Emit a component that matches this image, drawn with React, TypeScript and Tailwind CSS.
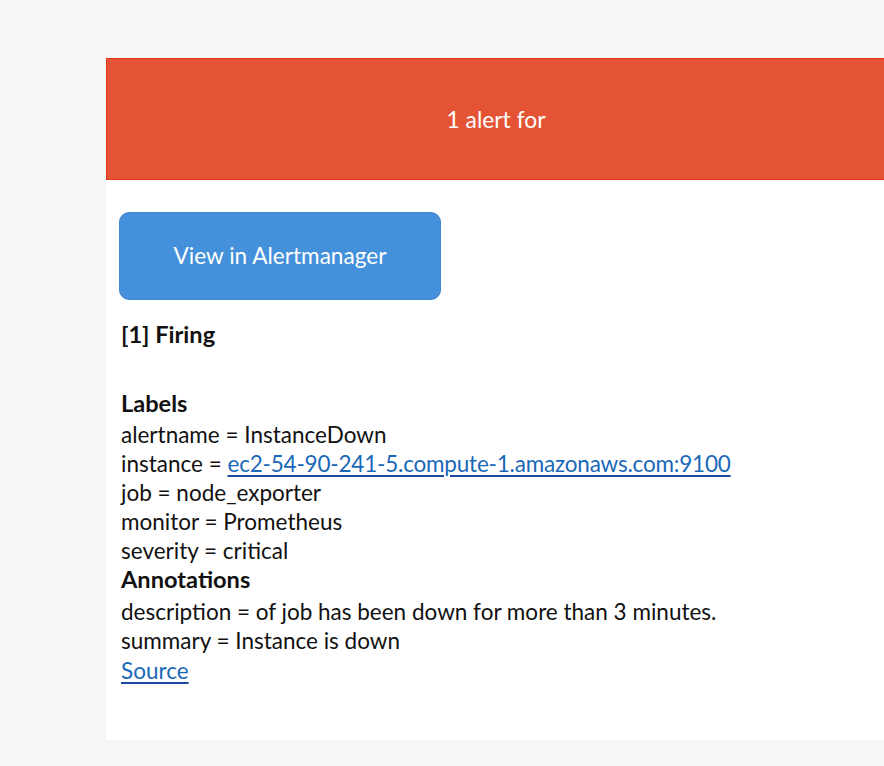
export default function App() {
  const labels = [
    ['alertname', 'InstanceDown'],
    ['instance', 'ec2-54-90-241-5.compute-1.amazonaws.com:9100', true],
    ['job', 'node_exporter'],
    ['monitor', 'Prometheus'],
    ['severity', 'critical'],
  ] as const;

  return (
    <div
      className="min-h-[766px] w-full overflow-hidden bg-[#f6f6f6] pt-[58px] pl-[106px] text-[#111]"
      style={{ fontFamily: 'Lato, "Open Sans", sans-serif' }}
    >
      <div className="h-[682px] w-[780px] bg-white">
        {/* header */}
        <div className="flex h-[122px] items-center justify-center border border-[#e0311a] bg-[#e45434] text-[22.8px] text-white">
          1 alert for
        </div>

        <div className="px-[13px] pt-[32px]">
          <a className="flex h-[88px] w-[322px] items-center justify-center rounded-[10px] border border-[#3f86d4] bg-[#4590da] text-[22.6px] text-white">
            View in Alertmanager
          </a>

          <div className="mt-[20px] pl-[2px] text-[22.5px] leading-[29px]">
            <div className="text-[23.6px] font-bold">[1] Firing</div>
            <div className="mt-[40px] text-[23.6px] font-bold">Labels</div>
            <div className="pt-[2px]">
              {labels.map(([k, v, link]) => (
                <div key={k}>
                  {k} ={' '}
                  {link ? (
                    <a className="tracking-[-0.2px] text-[#1a68b8] underline decoration-[#1a4aa0] underline-offset-[3px]">{v}</a>
                  ) : (
                    v
                  )}
                </div>
              ))}
            </div>
            <div className="text-[23.6px] font-bold">Annotations</div>
            <div className="pt-[3px]">description = of job has been down for more than 3 minutes.</div>
            <div>summary = Instance is down</div>
            <a className="mt-[1px] inline-block text-[#1a68b8] underline decoration-[#1a4aa0] underline-offset-[3px]">Source</a>
          </div>
        </div>
      </div>
    </div>
  );
}
